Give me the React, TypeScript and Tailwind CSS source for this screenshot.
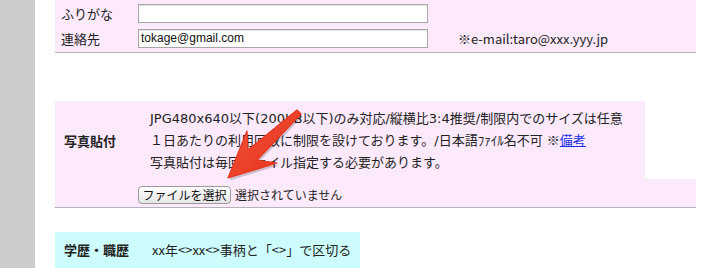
const jp = '"Noto Sans CJK JP", "Liberation Sans", sans-serif';
const wide = '"DejaVu Sans", "Noto Sans CJK JP", sans-serif';

// tail (299,112) -> tip (228,178)
const arrowPts = '228,178 277,163 257,160 301,114 297,110 248,150 247,131';

function Arrow() {
  return (
    <svg
      className="pointer-events-none absolute left-0 top-0"
      width={722}
      height={268}
      viewBox="0 0 722 268"
    >
      <defs>
        <linearGradient id="ar" x1="0" y1="0" x2="1" y2="1">
          <stop offset="0" stopColor="#f65a40" />
          <stop offset="1" stopColor="#e32a15" />
        </linearGradient>
      </defs>
      <polygon points={arrowPts} fill="#00000030" transform="translate(1.5,2.5)" />
      <polygon
        points={arrowPts}
        fill="url(#ar)"
        stroke="#e8361f"
        strokeWidth={1.2}
        strokeLinejoin="round"
      />
    </svg>
  );
}

function TextInput({ value }: { value?: string }) {
  return (
    <div className="flex h-[19px] w-[290px] items-center border border-[#a8a6a8] bg-white pl-[2px] text-[12px] text-[#111] shadow-[inset_0_1px_1px_rgba(0,0,0,0.12)] [font-family:'Liberation_Sans',sans-serif]">
      {value}
    </div>
  );
}

export default function App() {
  return (
    <div
      className="relative flex h-[268px] w-[722px] overflow-hidden bg-white text-[13px] text-[#222]"
      style={{ fontFamily: jp }}
    >
      <div className="w-[35px] shrink-0 bg-[#cdcbce]" />

      <div className="ml-[20px] flex w-[641px] flex-col">
        {/* 連絡先 */}
        <div className="flex h-[54px] flex-col gap-[5px] border-b border-[#b5b2b5] bg-[#fceafc] pt-[4px]">
          <div className="flex items-center">
            <span className="w-[83px] pl-[6px]">ふりがな</span>
            <TextInput />
          </div>
          <div className="flex items-center">
            <span className="w-[83px] pl-[6px]">連絡先</span>
            <TextInput value="tokage@gmail.com" />
            <span className="ml-[30px]">※e-mail:taro@xxx.yyy.jp</span>
          </div>
        </div>

        {/* 写真貼付 */}
        <div className="mt-[48px] flex flex-col border-b border-[#b5b2b5]">
          <div className="flex h-[78px] w-[590px] items-center bg-[#fceafc]">
            <span className="w-[95px] pl-[9px] font-bold">写真貼付</span>
            <div className="flex flex-col leading-[21.5px]" style={{ fontFamily: wide }}>
              <span>JPG480x640以下(200KB以下)のみ対応/縦横比3:4推奨/制限内でのサイズは任意</span>
              <span>
                １日あたりの利用回数に制限を設けております。/日本語ﾌｧｲﾙ名不可{' '}
                <span style={{ fontFamily: jp }}>※</span>
                <a className="text-[#1a2ee8] underline">備考</a>
              </span>
              <span>写真貼付は毎回ファイル指定する必要があります。</span>
            </div>
          </div>
          <div className="flex h-[28px] items-center bg-[#fceafc] pl-[83px] pt-[3px]">
            <button className="h-[18px] w-[93px] rounded-[4px] border border-[#9c9a9c] bg-gradient-to-b from-white to-[#e6e6e6] text-[12px] leading-none text-[#111]">
              ファイルを選択
            </button>
            <span className="ml-[4px] text-[12px]">選択されていません</span>
          </div>
        </div>

        {/* 学歴・職歴 */}
        <div className="mt-[24px] flex h-[36px] w-[305px] items-center bg-[#ccfcfc]">
          <span className="w-[97px] pl-[9px] font-bold">学歴・職歴</span>
          <span>xx年&lt;&gt;xx&lt;&gt;事柄と「&lt;&gt;」で区切る</span>
        </div>
      </div>

      <Arrow />
    </div>
  );
}
